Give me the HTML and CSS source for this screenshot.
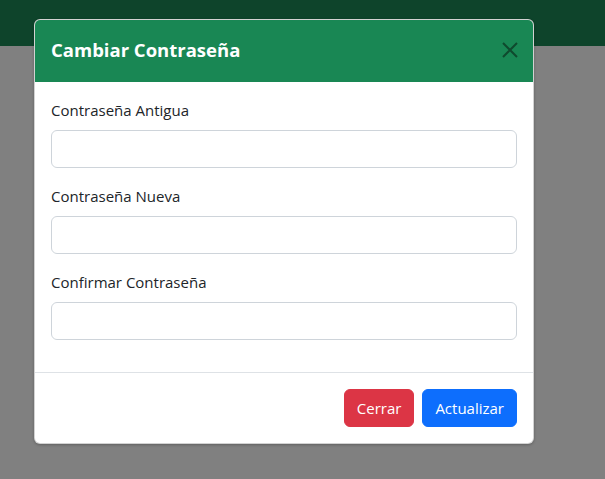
FILE: index.html
```html
<!DOCTYPE html>
<html lang="es">
<head>
<meta charset="utf-8">
<title>Cambiar Contraseña</title>
<link rel="stylesheet" href="styles.css">
</head>
<body>
<div class="page">
  <div class="navbar"></div>
  <div class="modal-wrap">
    <div class="modal">
      <div class="modal-header">
        <h5 class="modal-title">Cambiar Contraseña</h5>
        <button class="btn-close" type="button" aria-label="Cerrar">
          <svg viewBox="0 0 16 16" width="16" height="16"><path d="M1 1L15 15M15 1L1 15" stroke="currentColor" stroke-width="2" fill="none"/></svg>
        </button>
      </div>
      <div class="modal-body">
        <div class="field">
          <label class="form-label">Contraseña Antigua</label>
          <input class="form-control" type="password">
        </div>
        <div class="field">
          <label class="form-label">Contraseña Nueva</label>
          <input class="form-control" type="password">
        </div>
        <div class="field">
          <label class="form-label">Confirmar Contraseña</label>
          <input class="form-control" type="password">
        </div>
      </div>
      <div class="modal-footer">
        <button class="btn btn-danger" type="button">Cerrar</button>
        <button class="btn btn-primary" type="button">Actualizar</button>
      </div>
    </div>
  </div>
</div>
</body>
</html>
```

FILE: styles.css
```css
* { box-sizing: border-box; }
html, body { margin: 0; padding: 0; }
body {
  font-family: "Open Sans", "Noto Sans", sans-serif;
  font-size: 16px;
  line-height: 1.5;
  color: #212529;
  background: #808080;
  width: 605px;
  height: 479px;
  overflow: hidden;
}
.page { position: relative; width: 605px; height: 479px; background: #808080; }
.navbar { height: 46px; background: #0e442b; }
.modal-wrap {
  position: absolute;
  top: 19px;
  left: 34px;
  width: 500px;
}
.modal {
  background: #fff;
  border: 1px solid rgba(0,0,0,.175);
  border-radius: 6px;
  overflow: hidden;
  box-shadow: 0 1px 3px rgba(0,0,0,.25);
}
.modal-header {
  display: flex;
  align-items: center;
  padding: 16px 16px 17px 16px;
  background: #198754;
  color: #fff;
  margin: -1px -1px 0 -1px;
}
.modal-title {
  margin: 0 0 0 1px;
  font-size: 18.5px;
  font-weight: 700;
  line-height: 30px;
}
.btn-close {
  margin-left: auto;
  margin-right: -4px;
  width: 24px;
  height: 24px;
  padding: 4px;
  border: 0;
  background: transparent;
  color: #0f4a2e;
  display: flex;
  align-items: center;
  justify-content: center;
}
.btn-close svg { display: block; }
.modal-body { padding: 16px; }
.field { margin-bottom: 16px; }
.form-label {
  display: block;
  margin-bottom: 8px;
  font-size: 15px;
  line-height: 24px;
}
.form-control {
  display: block;
  width: 100%;
  height: 38px;
  border: 1px solid #ced4da;
  border-radius: 6px;
  background: #fff;
  padding: 6px 12px;
  font: inherit;
}
.modal-footer {
  border-top: 1px solid #dee2e6;
  padding: 12px;
  display: flex;
  justify-content: flex-end;
  gap: 8px;
}
.btn {
  margin: 4px;
  height: 38px;
  padding: 6px 12px;
  border: 1px solid transparent;
  border-radius: 6px;
  font: inherit;
  font-size: 15px;
  color: #fff;
}
.btn + .btn { margin-left: -4px; }
.btn-danger { background: #dc3545; border-color: #dc3545; }
.btn-primary { background: #0d6efd; border-color: #0d6efd; }
```
